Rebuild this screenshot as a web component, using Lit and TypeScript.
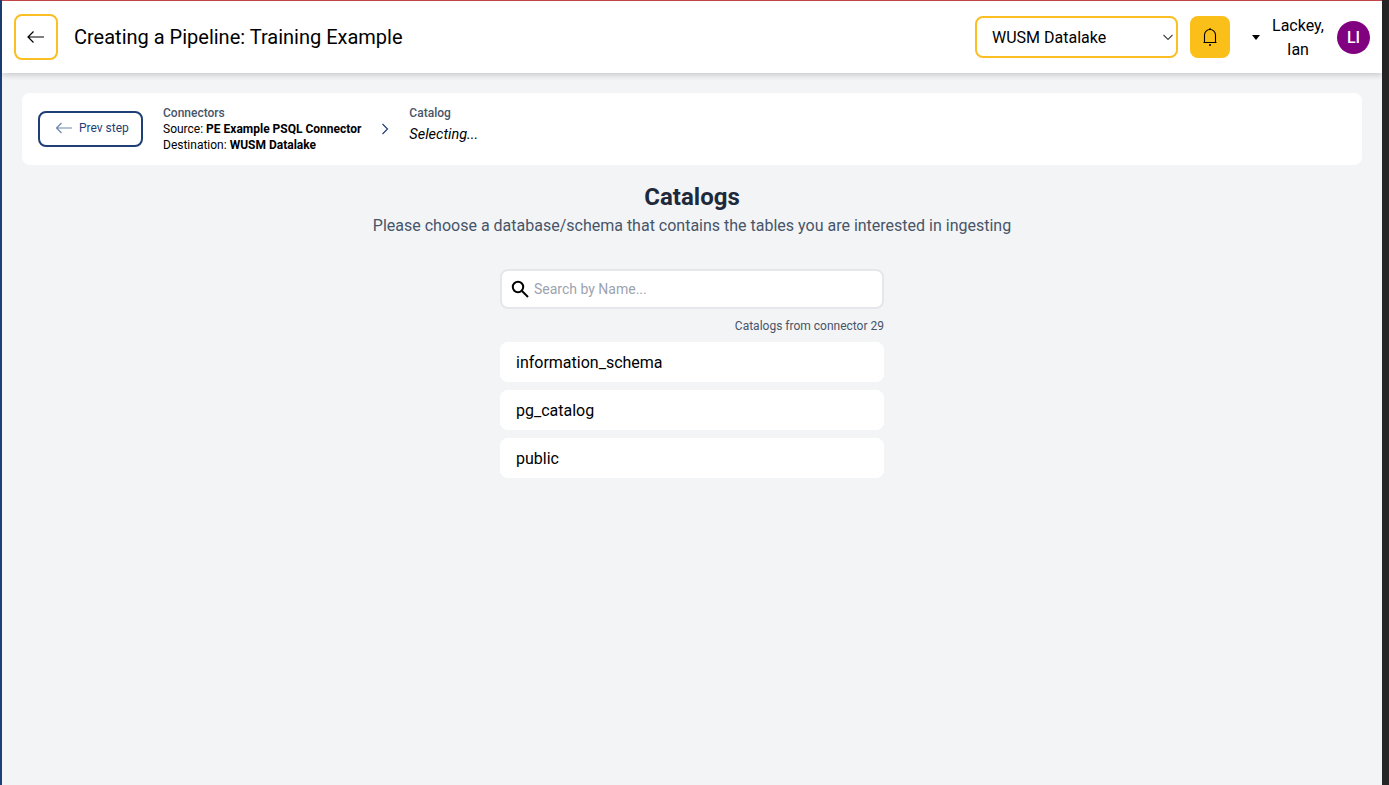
import { LitElement, html, css } from "lit";
import { customElement } from "lit/decorators.js";

@customElement("app-root")
export class AppRoot extends LitElement {
  static styles = css`
    :host {
      display: flex;
      height: 785px;
      overflow: hidden;
      font-family: Roboto, "Liberation Sans", sans-serif;
      background: #262626;
      color: #000;
    }
    .edge { width: 2px; flex: none; background: #1e3f75; }
    .main {
      width: 1380px;
      flex: none;
      display: flex;
      flex-direction: column;
      background: #f3f4f6;
      border-top: 1px solid #c9474b;
      box-sizing: border-box;
    }
    .gutter { flex: 1; background: #262626; }
    header {
      height: 72px;
      flex: none;
      background: #fff;
      display: flex;
      align-items: center;
      box-shadow: 0 2px 6px rgba(0,0,0,.18);
      padding: 0 12px;
      box-sizing: border-box;
      position: relative;
    }
    .back {
      width: 44px; height: 46px;
      box-sizing: border-box;
      border: 2px solid #fbbf24;
      border-radius: 8px;
      background: #fff;
      display: flex; align-items: center; justify-content: center;
      padding: 0;
    }
    h1 { margin: 0 0 0 16px; font-size: 20px; font-weight: 400; line-height: 28px; flex: 1; }
    .select {
      width: 203px; height: 42px;
      box-sizing: border-box;
      border: 2px solid #fbbf24;
      border-radius: 8px;
      display: flex; align-items: center; justify-content: space-between;
      padding: 0 2px 0 15px;
      font-size: 16px;
    }
    .bell {
      width: 40px; height: 42px;
      margin-left: 12px;
      background: #fbbf19;
      border-radius: 8px;
      display: flex; align-items: center; justify-content: center;
    }
    .caret {
      margin-left: 22px;
      width: 0; height: 0;
      border-left: 4.500px solid transparent;
      border-right: 4.500px solid transparent;
      border-top: 5px solid #000;
    }
    .name {
      width: 72px;
      margin-left: 2px;
      padding-top: 1px;
      text-align: center;
      font-size: 16px;
      line-height: 24px;
    }
    .avatar {
      width: 33px; height: 33px;
      margin-left: 3px;
      border-radius: 50%;
      background: #800080;
      color: #fff;
      font-size: 16px;
      font-weight: 500;
      display: flex; align-items: center; justify-content: center;
    }
    .crumbs {
      margin: 20px 20px 0;
      height: 72px;
      flex: none;
      background: #fff;
      border-radius: 8px;
      display: flex;
      align-items: center;
      padding: 0 16px;
      box-sizing: border-box;
    }
    .prev {
      width: 105px; height: 36px;
      box-sizing: border-box;
      border: 2px solid #1e3f75;
      border-radius: 8px;
      display: flex; align-items: center;
      gap: 6px;
      padding: 0 0 2px 15px;
      color: #1e3f75;
      font-size: 12px;
    }
    .step { font-size: 12px; line-height: 16px; margin-left: 20px; }
    .step .label { font-weight: 500; color: #475569; }
    .step b { font-weight: 700; }
    .chev { margin-left: 20px; display: flex; }
    .step.cat { margin-left: 20px; align-self: flex-start; margin-top: 12px; }
    .selecting { font-style: italic; font-size: 14.500px; line-height: 20px; margin-top: 4px; }
    .content {
      display: flex;
      flex-direction: column;
      align-items: center;
      padding-top: 16px;
    }
    h2 { margin: 0; font-size: 24px; font-weight: 700; line-height: 32px; color: #1e293b; }
    .sub { font-size: 16px; line-height: 24px; color: #475569; padding-top: 1px; }
    .col { width: 384px; margin-top: 31px; display: flex; flex-direction: column; }
    .search {
      height: 40px;
      box-sizing: border-box;
      background: #fff;
      border: 2px solid #e5e7eb;
      border-radius: 8px;
      display: flex; align-items: center;
      padding-left: 8px;
      gap: 4px;
      font-size: 14px;
      color: #9ca3af;
    }
    .from { text-align: right; font-size: 12px; line-height: 16px; color: #475569; margin-top: 9px; margin-bottom: 8px; }
    .list { display: flex; flex-direction: column; gap: 8px; }
    .item {
      height: 40px;
      background: #fff;
      border-radius: 8px;
      display: flex; align-items: center;
      padding-left: 16px;
      font-size: 16px;
    }
  `;

  render() {
    return html`
      <div class="edge"></div>
      <div class="main">
        <header>
          <button class="back" aria-label="Back">
            <svg width="20" height="16" viewBox="0 0 20 16" fill="none" stroke="#000" stroke-width="1.2">
              <path d="M18 8H2M7.500 2.500L2 8l5.500 5.500"/>
            </svg>
          </button>
          <h1>Creating a Pipeline: Training Example</h1>
          <div class="select">
            <span>WUSM Datalake</span>
            <svg width="12" height="12" viewBox="0 0 12 12" fill="none" stroke="#444" stroke-width="1.1"><path d="M1.500 4l4.500 4.500L10.500 4"/></svg>
          </div>
          <div class="bell">
            <svg width="18" height="20" viewBox="0 0 18 20" fill="none" stroke="#000" stroke-width="1.1">
              <path d="M3.500 15.500V8a5.500 5.500 0 0 1 11 0v7.500M2.500 15.500h13"/>
              <path d="M9 1v1.500" />
              <circle cx="9" cy="18" r="1" fill="#000" stroke="none"/>
            </svg>
          </div>
          <div class="caret"></div>
          <div class="name">Lackey, Ian</div>
          <div class="avatar">LI</div>
        </header>
        <div class="crumbs">
          <div class="prev">
            <svg width="18" height="12" viewBox="0 0 18 12" fill="none" stroke="#6b87ad" stroke-width="1.2"><path d="M17 6H1.500M6.500 1L1.500 6l5 5" /></svg>
            <span>Prev step</span>
          </div>
          <div class="step">
            <div class="label">Connectors</div>
            <div>Source: <b>PE Example PSQL Connector</b></div>
            <div>Destination: <b>WUSM Datalake</b></div>
          </div>
          <div class="chev">
            <svg width="8" height="12" viewBox="0 0 8 12" fill="none" stroke="#1e3f75" stroke-width="1.2"><path d="M1.500 1L6.500 6l-5 5"/></svg>
          </div>
          <div class="step cat">
            <div class="label">Catalog</div>
            <div class="selecting">Selecting...</div>
          </div>
        </div>
        <div class="content">
          <h2>Catalogs</h2>
          <div class="sub">Please choose a database/schema that contains the tables you are interested in ingesting</div>
          <div class="col">
            <div class="search">
              <svg width="20" height="20" viewBox="0 0 20 20" fill="none" stroke="#000" stroke-width="2"><circle cx="8" cy="8" r="5.200"/><path d="M12 12l6 6"/></svg>
              <span>Search by Name...</span>
            </div>
            <div class="from">Catalogs from connector 29</div>
            <div class="list">
              <div class="item">information_schema</div>
              <div class="item">pg_catalog</div>
              <div class="item">public</div>
            </div>
          </div>
        </div>
      </div>
      <div class="gutter"></div>
    `;
  }
}
